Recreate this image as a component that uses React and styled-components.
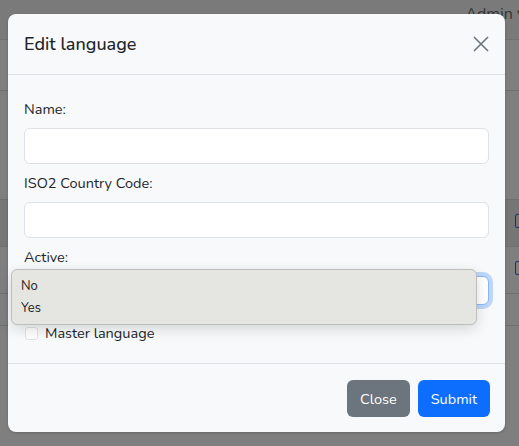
import React from 'react';
import styled, { createGlobalStyle } from 'styled-components';

const GlobalStyle = createGlobalStyle`
  html, body {
    margin: 0;
    padding: 0;
    width: 519px;
    height: 446px;
    overflow: hidden;
    background: #ffffff;
    font-family: "Nunito", "Lato", "Noto Sans", sans-serif;
    color: #212529;
  }
  * { box-sizing: border-box; }
`;

const Page = styled.div`
  position: relative;
  width: 519px;
  height: 446px;
  overflow: hidden;
`;

const Navbar = styled.div`
  height: 40px;
  background: #f4f4f4;
  border-bottom: 1px solid #e2e2e2;
  display: flex;
  justify-content: flex-end;
  align-items: flex-start;
  padding: 2px 0 0;
`;

const NavUser = styled.span`
  font-size: 16px;
  line-height: 24px;
  color: #6a6a6a;
  white-space: nowrap;
  margin-right: -6px;
`;

const TableArea = styled.div`
  padding-top: 50px;
`;

const TableRow = styled.div`
  height: ${p => p.h}px;
  border-top: 1px solid #dedede;
  background: ${p => (p.striped ? '#ececec' : '#ffffff')};
  display: flex;
  justify-content: flex-end;
  align-items: center;
  &:last-child { border-bottom: 1px solid #dedede; }
`;

const EditIcon = styled.span`
  width: 12px;
  height: 14px;
  border: 1.5px solid #0d6efd;
  border-radius: 2px;
  margin-right: -8px;
  margin-top: -4px;
`;

const Backdrop = styled.div`
  position: absolute;
  inset: 0;
  background: rgba(0, 0, 0, 0.5);
`;

const Dialog = styled.div`
  position: absolute;
  left: 8px;
  top: 14px;
  width: 497px;
  background: #f8f9fa;
  border-radius: 8px;
  box-shadow: 0 1px 3px rgba(0, 0, 0, 0.2);
  display: flex;
  flex-direction: column;
`;

const Header = styled.div`
  height: 61px;
  padding: 0 16px;
  border-bottom: 1px solid #dee2e6;
  display: flex;
  align-items: center;
  justify-content: space-between;
`;

const Title = styled.h5`
  margin: 0;
  font-size: 18px;
  font-weight: 500;
  line-height: 1.5;
  color: #212529;
`;

const CloseX = styled.button`
  border: 0;
  background: transparent;
  padding: 0;
  width: 16px;
  height: 16px;
  display: flex;
  cursor: pointer;
`;

const Body = styled.div`
  padding: 22px 16px 18px;
  position: relative;
  font-size: 14.5px;
`;

const Label = styled.label`
  display: block;
  line-height: 24px;
  margin-bottom: 7px;
`;

const Input = styled.input`
  display: block;
  width: 100%;
  height: 36px;
  background: #ffffff;
  border: 1px solid #dee2e6;
  border-radius: 6px;
  margin-bottom: 7px;
  font: inherit;
`;

const SelectBox = styled.div`
  height: 29px;
  margin-top: 7px;
  background: #ffffff;
  border: 1px solid #86b7fe;
  border-radius: 6px;
  box-shadow: 0 0 0 4px rgba(13, 110, 253, 0.25);
`;

const CheckRow = styled.div`
  display: flex;
  align-items: center;
  gap: 7px;
  margin-top: 16px;
  line-height: 24px;
`;

const CheckBox = styled.span`
  width: 13px;
  height: 13px;
  margin-left: 1px;
  background: #ffffff;
  border: 1px solid #dee2e6;
  border-radius: 3px;
`;

const Options = styled.ul`
  position: absolute;
  left: 3px;
  top: 194px;
  width: 466px;
  margin: 0;
  padding: 5px 0;
  list-style: none;
  background: #e5e5e2;
  border: 1px solid #bdbdbb;
  border-radius: 6px;
  box-shadow: 0 4px 14px rgba(0, 0, 0, 0.14);
`;

const Option = styled.li`
  font-size: 13px;
  line-height: 22px;
  padding-left: 9px;
  color: #1c1c1c;
`;

const Footer = styled.div`
  border-top: 1px solid #dee2e6;
  padding: 16px 15px 15px;
  display: flex;
  justify-content: flex-end;
  gap: 8px;
`;

const Button = styled.button`
  height: 37px;
  padding: 0 13px;
  border: 0;
  border-radius: 6px;
  font: inherit;
  font-size: 14.5px;
  color: #ffffff;
  background: ${p => (p.primary ? '#0d6efd' : '#6c757d')};
`;

export default function App() {
  return (
    <Page>
      <GlobalStyle />
      <Navbar>
        <NavUser>Admin ▾</NavUser>
      </Navbar>
      <TableArea>
        <TableRow h={109} />
        <TableRow h={47} striped><EditIcon /></TableRow>
        <TableRow h={47}><EditIcon /></TableRow>
        <TableRow h={33} />
      </TableArea>
      <Backdrop />
      <Dialog>
        <Header>
          <Title>Edit language</Title>
          <CloseX aria-label="Close">
            <svg width="16" height="16" viewBox="0 0 16 16">
              <path d="M1 1L15 15M15 1L1 15" stroke="#6c757d" strokeWidth="1.6" fill="none" />
            </svg>
          </CloseX>
        </Header>
        <Body>
          <Label>Name:</Label>
          <Input />
          <Label>ISO2 Country Code:</Label>
          <Input />
          <Label>Active:</Label>
          <SelectBox />
          <CheckRow>
            <CheckBox />
            <span>Master language</span>
          </CheckRow>
          <Options>
            <Option>No</Option>
            <Option>Yes</Option>
          </Options>
        </Body>
        <Footer>
          <Button>Close</Button>
          <Button primary>Submit</Button>
        </Footer>
      </Dialog>
    </Page>
  );
}
